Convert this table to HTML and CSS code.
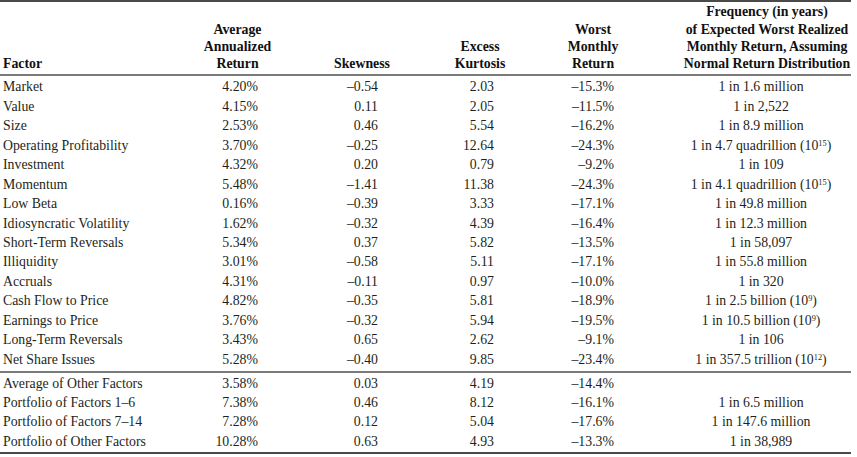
FILE: index.html
```html
<!DOCTYPE html>
<html lang="en">
<head>
<meta charset="utf-8">
<title>Factor statistics</title>
<link rel="stylesheet" href="styles.css">
</head>
<body>
<table class="stats">
  <colgroup>
    <col class="c-factor">
    <col class="c-avg">
    <col class="c-skew">
    <col class="c-kurt">
    <col class="c-worst">
    <col class="c-freq">
  </colgroup>
  <thead>
    <tr>
      <th class="h-left">Factor</th>
      <th>Average<br>Annualized<br>Return</th>
      <th>Skewness</th>
      <th>Excess<br>Kurtosis</th>
      <th>Worst<br>Monthly<br>Return</th>
      <th class="h-freq">Frequency (in years)<br>of Expected Worst Realized<br>Monthly Return, Assuming<br>Normal Return Distribution</th>
    </tr>
  </thead>
  <tbody class="main">
    <tr><td class="name">Market</td><td class="avg">4.20%</td><td class="skew">–0.54</td><td class="kurt">2.03</td><td class="worst">–15.3%</td><td class="freq">1 in 1.6 million</td></tr>
    <tr><td class="name">Value</td><td class="avg">4.15%</td><td class="skew">0.11</td><td class="kurt">2.05</td><td class="worst">–11.5%</td><td class="freq">1 in 2,522</td></tr>
    <tr><td class="name">Size</td><td class="avg">2.53%</td><td class="skew">0.46</td><td class="kurt">5.54</td><td class="worst">–16.2%</td><td class="freq">1 in 8.9 million</td></tr>
    <tr><td class="name">Operating Profitability</td><td class="avg">3.70%</td><td class="skew">–0.25</td><td class="kurt">12.64</td><td class="worst">–24.3%</td><td class="freq">1 in 4.7 quadrillion (10<sup>15</sup>)</td></tr>
    <tr><td class="name">Investment</td><td class="avg">4.32%</td><td class="skew">0.20</td><td class="kurt">0.79</td><td class="worst">–9.2%</td><td class="freq">1 in 109</td></tr>
    <tr><td class="name">Momentum</td><td class="avg">5.48%</td><td class="skew">–1.41</td><td class="kurt">11.38</td><td class="worst">–24.3%</td><td class="freq">1 in 4.1 quadrillion (10<sup>15</sup>)</td></tr>
    <tr><td class="name">Low Beta</td><td class="avg">0.16%</td><td class="skew">–0.39</td><td class="kurt">3.33</td><td class="worst">–17.1%</td><td class="freq">1 in 49.8 million</td></tr>
    <tr><td class="name">Idiosyncratic Volatility</td><td class="avg">1.62%</td><td class="skew">–0.32</td><td class="kurt">4.39</td><td class="worst">–16.4%</td><td class="freq">1 in 12.3 million</td></tr>
    <tr><td class="name">Short-Term Reversals</td><td class="avg">5.34%</td><td class="skew">0.37</td><td class="kurt">5.82</td><td class="worst">–13.5%</td><td class="freq">1 in 58,097</td></tr>
    <tr><td class="name">Illiquidity</td><td class="avg">3.01%</td><td class="skew">–0.58</td><td class="kurt">5.11</td><td class="worst">–17.1%</td><td class="freq">1 in 55.8 million</td></tr>
    <tr><td class="name">Accruals</td><td class="avg">4.31%</td><td class="skew">–0.11</td><td class="kurt">0.97</td><td class="worst">–10.0%</td><td class="freq">1 in 320</td></tr>
    <tr><td class="name">Cash Flow to Price</td><td class="avg">4.82%</td><td class="skew">–0.35</td><td class="kurt">5.81</td><td class="worst">–18.9%</td><td class="freq">1 in 2.5 billion (10<sup>9</sup>)</td></tr>
    <tr><td class="name">Earnings to Price</td><td class="avg">3.76%</td><td class="skew">–0.32</td><td class="kurt">5.94</td><td class="worst">–19.5%</td><td class="freq">1 in 10.5 billion (10<sup>9</sup>)</td></tr>
    <tr><td class="name">Long-Term Reversals</td><td class="avg">3.43%</td><td class="skew">0.65</td><td class="kurt">2.62</td><td class="worst">–9.1%</td><td class="freq">1 in 106</td></tr>
    <tr><td class="name">Net Share Issues</td><td class="avg">5.28%</td><td class="skew">–0.40</td><td class="kurt">9.85</td><td class="worst">–23.4%</td><td class="freq">1 in 357.5 trillion (10<sup>12</sup>)</td></tr>
  </tbody>
  <tbody class="summary">
    <tr><td class="name">Average of Other Factors</td><td class="avg">3.58%</td><td class="skew">0.03</td><td class="kurt">4.19</td><td class="worst">–14.4%</td><td class="freq"></td></tr>
    <tr><td class="name">Portfolio of Factors 1–6</td><td class="avg">7.38%</td><td class="skew">0.46</td><td class="kurt">8.12</td><td class="worst">–16.1%</td><td class="freq">1 in 6.5 million</td></tr>
    <tr><td class="name">Portfolio of Factors 7–14</td><td class="avg">7.28%</td><td class="skew">0.12</td><td class="kurt">5.04</td><td class="worst">–17.6%</td><td class="freq">1 in 147.6 million</td></tr>
    <tr><td class="name">Portfolio of Other Factors</td><td class="avg">10.28%</td><td class="skew">0.63</td><td class="kurt">4.93</td><td class="worst">–13.3%</td><td class="freq">1 in 38,989</td></tr>
  </tbody>
</table>
</body>
</html>
```

FILE: styles.css
```css
html, body {
  margin: 0;
  padding: 0;
  background: #ffffff;
}

body {
  font-family: "Liberation Serif", "Times New Roman", serif;
  color: #231f20;
}

.stats {
  width: 851px;
  border-collapse: collapse;
  table-layout: fixed;
  font-size: 13.8px;
}

.c-factor { width: 190px; }
.c-avg { width: 95px; }
.c-skew { width: 154px; }
.c-kurt { width: 82px; }
.c-worst { width: 144px; }
.c-freq { width: 186px; }

.stats thead tr {
  border-top: 2px solid #4a4a4a;
  border-bottom: 2px solid #7a7a7a;
}

.stats th {
  font-weight: bold;
  color: #111;
  line-height: 17.3px;
  vertical-align: bottom;
  text-align: center;
  padding: 1.3px 0 1.5px 0;
  white-space: nowrap;
}

.stats th.h-left {
  text-align: left;
  padding-left: 3px;
}

.stats th.h-freq {
  padding-left: 18px;
}

.stats td {
  line-height: 19.43px;
  height: 19.43px;
  padding: 0;
  white-space: nowrap;
}

.stats tbody.main tr:first-child td { padding-top: 1.5px; }
.stats tbody.main tr:last-child td { padding-bottom: 2px; }
.stats tbody.main { border-bottom: 2px solid #7a7a7a; }

.stats tbody.summary tr:first-child td { padding-top: 0.5px; }
.stats tbody.summary tr:last-child td { padding-bottom: 0.8px; }
.stats tbody.summary { border-bottom: 2px solid #4a4a4a; }

.name { text-align: left; padding-left: 3px !important; }
.avg { text-align: right; padding-right: 27px !important; }
.skew { text-align: right; padding-right: 61px !important; }
.kurt { text-align: right; padding-right: 27px !important; }
.worst { text-align: right; padding-right: 51px !important; }
.freq { text-align: center; padding-left: 6px !important; }

.freq sup {
  font-size: 0.6em;
  line-height: 0;
  vertical-align: 0.5em;
}
```
